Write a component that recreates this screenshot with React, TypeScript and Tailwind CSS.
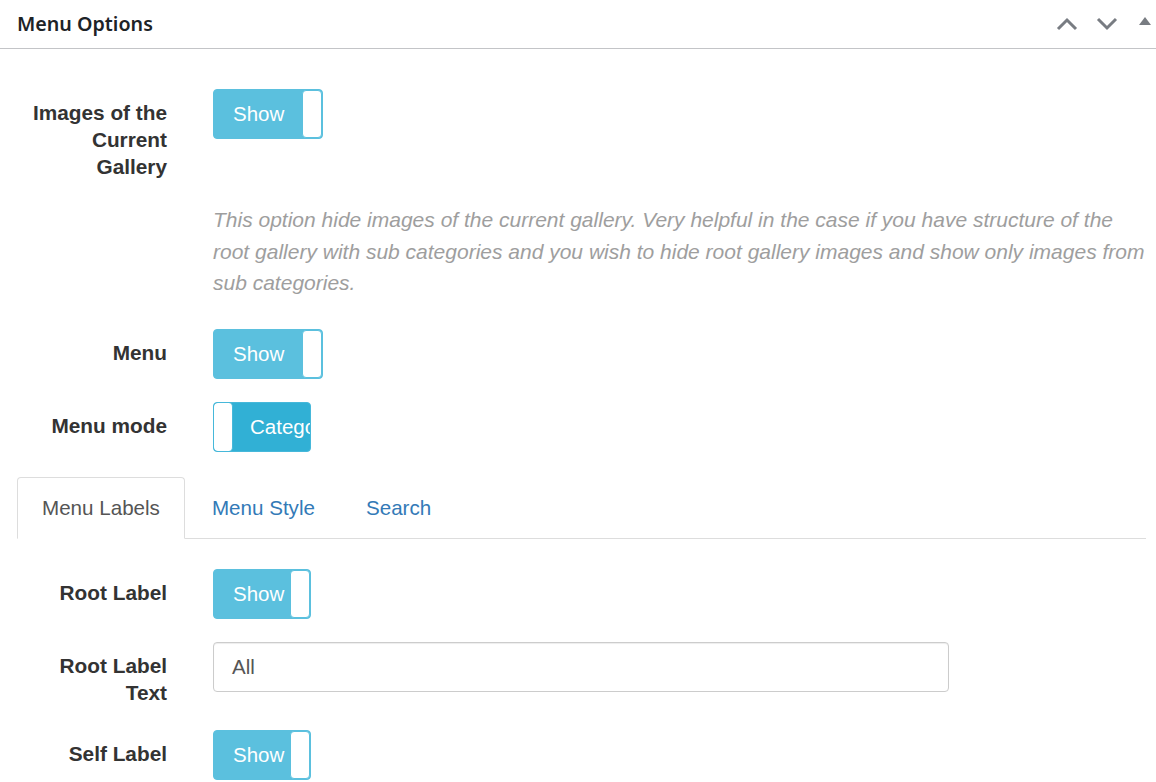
import React from 'react';

const labelCls =
    "w-[150px] shrink-0 pt-[10px] pb-[1.5px] text-right text-[20.8px] leading-[27px] font-bold text-[#333]";

function Toggle({ width, text, off }: { width: number; text: string; off?: boolean }) {
    if (off) {
        return (
            <div
                className="flex h-[50px] overflow-hidden rounded-[4px] border border-[#46b8da] bg-[#31b0d5]"
                style={{ width }}
            >
                <div className="h-full w-[19px] shrink-0 rounded-[4px] border-r border-[#46b8da] bg-white" />
                <div className="flex-1 overflow-hidden whitespace-nowrap pl-[17px] text-[20.5px] leading-[48px] text-white">
                    {text}
                </div>
            </div>
        );
    }
    return (
        <div
            className="flex h-[50px] overflow-hidden rounded-[4px] border border-[#5bc0de] bg-[#5bc0de]"
            style={{ width }}
        >
            <div className="flex-1 whitespace-nowrap pl-[19px] text-[20.5px] leading-[48px] text-white">
                {text}
            </div>
            <div className="h-full w-[20px] shrink-0 rounded-[4px] border border-[#5bc0de] bg-white" />
        </div>
    );
}

function Row({ label, children, className }: { label: React.ReactNode; children: React.ReactNode; className?: string }) {
    return (
        <div className={`flex items-start ${className ?? ''}`}>
            <div className={labelCls}>{label}</div>
            <div className="ml-[46px]">{children}</div>
        </div>
    );
}

export default function App() {
    return (
        <div
            className="h-[782px] w-[1156px] overflow-hidden bg-white"
            style={{ fontFamily: '"Liberation Sans", Arial, sans-serif' }}
        >
            <div className="flex h-[49px] items-center justify-between border-b border-[#c3c4c7] pl-[17px] pr-[5px]">
                <h2
                    className="text-[19.7px] font-semibold text-[#1d2327]"
                    style={{ fontFamily: '"Noto Sans", "Open Sans", sans-serif' }}
                >
                    Menu Options
                </h2>
                <div className="flex items-center">
                    <svg width="22" height="14" viewBox="0 0 22 14" className="mr-[18px]">
                        <path d="M2 12 L11 3 L20 12" fill="none" stroke="#787c82" strokeWidth="3" />
                    </svg>
                    <svg width="22" height="14" viewBox="0 0 22 14" className="mr-[21px]">
                        <path d="M2 2 L11 11 L20 2" fill="none" stroke="#787c82" strokeWidth="3" />
                    </svg>
                    <svg width="12" height="10" viewBox="0 0 12 10" className="mb-[6px]">
                        <path d="M0 9 L6 1 L12 9 Z" fill="#787c82" />
                    </svg>
                </div>
            </div>

            <div className="pl-[17px] pr-[10px] pt-[40px]">
                <Row label={<>Images of the<br />Current<br />Gallery</>} className="mb-[22.5px]">
                    <Toggle width={110} text="Show" />
                </Row>

                <p className="mb-[30.5px] whitespace-nowrap pl-[196px] text-[21px] italic leading-[31.5px] text-[#9e9e9e]">
                    This option hide images of the current gallery. Very helpful in the case if you have structure of the
                    <br />
                    root gallery with sub categories and you wish to hide root gallery images and show only images from
                    <br />
                    sub categories.
                </p>

                <Row label="Menu" className="mb-[23px]">
                    <Toggle width={110} text="Show" />
                </Row>

                <Row label="Menu mode" className="mb-[25px]">
                    <Toggle width={98} text="Categories" off />
                </Row>

                <div className="mb-[30px] flex h-[62px] border-b border-[#ddd] text-[20.6px]">
                    <div className="-mb-px rounded-t-[4px] border border-b-white border-[#ddd] bg-white px-6 leading-[60px] text-[#555]">
                        Menu Labels
                    </div>
                    <div className="ml-[3px] px-6 leading-[62px] text-[#337ab7]">Menu Style</div>
                    <div className="ml-[3px] px-6 leading-[62px] text-[#337ab7]">Search</div>
                </div>

                <Row label="Root Label" className="mb-[23px]">
                    <Toggle width={98} text="Show" />
                </Row>

                <Row label={<>Root Label<br />Text</>} className="mb-[22.5px]">
                    <div className="flex h-[50px] w-[736px] items-center rounded-[4px] border border-[#ccc] bg-white px-[18px] text-[20.5px] text-[#555] shadow-[inset_0_1px_1px_rgba(0,0,0,0.075)]">
                        All
                    </div>
                </Row>

                <Row label="Self Label">
                    <Toggle width={98} text="Show" />
                </Row>
            </div>
        </div>
    );
}
